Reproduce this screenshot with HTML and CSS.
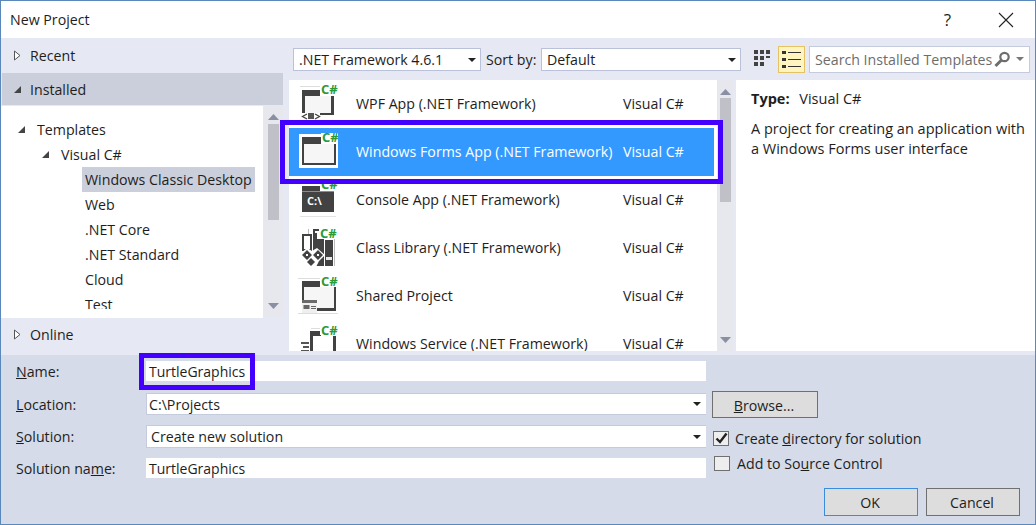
FILE: index.html
```html
<!DOCTYPE html>
<html lang="en">
<head>
    <meta charset="UTF-8">
    <title>New Project</title>
    <link rel="stylesheet" href="styles.css">
</head>
<body>
<div class="dialog">

    <div class="titlebar">
        <span class="title">New Project</span>
        <span class="help">?</span>
        <svg class="close" width="16" height="16" viewBox="0 0 16 16"><path d="M1 1L15 15M15 1L1 15" stroke="#222" stroke-width="1.1" fill="none"/></svg>
    </div>

    <div class="main">
        <div class="sidebar">
            <div class="section section-recent">
                <svg class="arrow" width="8" height="11" viewBox="0 0 8 11"><path d="M1 1L6.500 5.500L1 10Z" fill="#fff" stroke="#555"/></svg>
                <span>Recent</span>
            </div>
            <div class="section section-installed">
                <svg class="arrow" width="9" height="9" viewBox="0 0 9 9"><path d="M8 1V8H1Z" fill="#444"/></svg>
                <span>Installed</span>
            </div>
            <div class="tree-wrap">
                <div class="tree">
                    <div class="tree-row level-0">
                        <svg class="tree-arrow" width="9" height="9" viewBox="0 0 9 9"><path d="M8 1V8H1Z" fill="#444"/></svg>
                        Templates
                    </div>
                    <div class="tree-row level-1">
                        <svg class="tree-arrow" width="9" height="9" viewBox="0 0 9 9"><path d="M8 1V8H1Z" fill="#444"/></svg>
                        Visual C#
                    </div>
                    <div class="tree-row level-2 selected">Windows Classic Desktop</div>
                    <div class="tree-row level-2">Web</div>
                    <div class="tree-row level-2">.NET Core</div>
                    <div class="tree-row level-2">.NET Standard</div>
                    <div class="tree-row level-2">Cloud</div>
                    <div class="tree-row level-2">Test</div>
                </div>
                <div class="scrollbar scrollbar-tree">
                    <svg width="11" height="6" viewBox="0 0 11 6"><path d="M0 6L5.500 0L11 6Z" fill="#8a8fa3"/></svg>
                    <div class="thumb thumb-tree"></div>
                    <svg class="scroll-down" width="11" height="6" viewBox="0 0 11 6"><path d="M0 0L5.500 6L11 0Z" fill="#8a8fa3"/></svg>
                </div>
            </div>
            <div class="section section-online">
                <svg class="arrow" width="8" height="11" viewBox="0 0 8 11"><path d="M1 1L6.500 5.500L1 10Z" fill="#fff" stroke="#555"/></svg>
                <span>Online</span>
            </div>
        </div>

        <div class="content">
            <div class="toolbar">
                <div class="dropdown dropdown-framework"><span>.NET Framework 4.6.1</span><i class="caret"></i></div>
                <span class="sort-label">Sort by:</span>
                <div class="dropdown dropdown-sort"><span>Default</span><i class="caret"></i></div>
                <svg class="view-small" width="20" height="20" viewBox="0 0 20 20" fill="#424242">
                    <path d="M1 1h4v4H1zM7 1h4v4H7zM13 1h4v4h-4zM1 7h4v4H1zM7 7h4v4H7zM13 7h4v2h-4zM1 13h4v4H1zM7 13h4v4H7z"/>
                </svg>
                <div class="view-list">
                    <svg width="19" height="17" viewBox="0 0 19 17" fill="#333">
                        <path d="M0 0h4v3H0zM6 1h13v1H6zM0 7h4v3H0zM6 8h13v1H6zM0 14h4v3H0zM6 15h13v1H6z"/>
                    </svg>
                </div>
                <div class="search">
                    <span class="search-text">Search Installed Templates</span>
                    <svg class="search-icon" width="17" height="17" viewBox="0 0 17 17"><circle cx="10.500" cy="6" r="4.200" fill="none" stroke="#6d6d6d" stroke-width="2.200"/><path d="M7.500 9L1.500 15" stroke="#6d6d6d" stroke-width="3"/></svg>
                    <i class="caret caret-search"></i>
                </div>
            </div>

            <div class="panes">
                <div class="list-wrap">
                    <div class="list">
                        <div class="list-row">
                            <svg class="tpl-icon" width="40" height="48" viewBox="0 0 40 48">
                                <path d="M2 6H26V7H2Z" fill="#ddd"/>
                                <path d="M7 16H33V33H7Z" fill="#f6f6f6"/>
                                <path d="M4 10H36V35H22V33H33V16H7V33H4Z" fill="#424242"/>
                                <path d="M22 4H40V16H22Z" fill="#fff"/>
                                <text class="cs" x="23" y="14">C#</text>
                                <path d="M9 34L4.500 36.500L9 39M17 34L21.500 36.500L17 39" fill="none" stroke="#424242" stroke-width="1.300"/>
                                <path d="M10 33H16V39H10Z" fill="#555"/>
                            </svg>
                            <span class="tpl-name">WPF App (.NET Framework)</span>
                            <span class="tpl-lang">Visual C#</span>
                        </div>
                        <div class="list-row active">
                            <svg class="tpl-icon" width="40" height="48" viewBox="0 0 40 48">
                                <path d="M1 6H41V40H1Z" fill="#fff"/>
                                <path d="M4 9H38V37H4Z" fill="#424242"/>
                                <path d="M6 16H36V35H6Z" fill="#f6f6f6"/>
                                <path d="M23 5H41V16H23Z" fill="#fff"/>
                                <text class="cs" x="24" y="14">C#</text>
                            </svg>
                            <span class="tpl-name">Windows Forms App (.NET Framework)</span>
                            <span class="tpl-lang">Visual C#</span>
                        </div>
                        <div class="list-row">
                            <svg class="tpl-icon" width="40" height="48" viewBox="0 0 40 48">
                                <path d="M4 10H36V36H4Z" fill="#424242"/>
                                <path d="M4 15H36V16H4Z" fill="#8c8c8c"/>
                                <path d="M22 3H40V15H22Z" fill="#fff"/>
                                <text class="cs" x="23" y="13">C#</text>
                                <text class="console" x="9" y="29">C:\</text>
                                <path d="M2 40H38V41H2Z" fill="#e4e4e4"/>
                            </svg>
                            <span class="tpl-name">Console App (.NET Framework)</span>
                            <span class="tpl-lang">Visual C#</span>
                        </div>
                        <div class="list-row">
                            <svg class="tpl-icon" width="40" height="48" viewBox="0 0 40 48">
                                <path d="M10 5H11V10H10Z" fill="#bbb"/>
                                <path d="M4 10H14V27H4ZM6 12V25H12V12Z" fill="#424242" fill-rule="evenodd"/>
                                <path d="M15 5H26V42H15Z" fill="#424242"/>
                                <path d="M27 16H35V42H27Z" fill="#424242"/>
                                <path d="M28 33H34V36H28Z" fill="#e8e8e8"/>
                                <path d="M36 13H37V42H36Z" fill="#bbb"/>
                                <path d="M21 4H40V15H21Z" fill="#fff"/>
                                <path d="M17 7H21V15H19V9H17Z" fill="#fff"/>
                                <text class="cs" x="22" y="14">C#</text>
                                <path d="M2 30L9 24L14 27L19 24L27 31L21 37L18 43H8L5 36Z" fill="#fff"/>
                                <path d="M9 26L14 31L9 36L4 31ZM20 26L25 31L20 36L15 31ZM13 34L17 38L13 42L9 38Z" fill="#424242"/>
                                <path d="M8 30H10V32H8ZM19 30H21V32H19Z" fill="#fff"/>
                            </svg>
                            <span class="tpl-name">Class Library (.NET Framework)</span>
                            <span class="tpl-lang">Visual C#</span>
                        </div>
                        <div class="list-row">
                            <svg class="tpl-icon" width="40" height="48" viewBox="0 0 40 48">
                                <path d="M0 6H24V7H0ZM0 41H40V42H0Z" fill="#ddd"/>
                                <path d="M4 9H38V39H4Z" fill="#f6f6f6"/>
                                <path d="M4 9H23V15H6V28H4ZM36 15H38V39H19V36H36Z" fill="#424242"/>
                                <path d="M22 4H40V15H22Z" fill="#fff"/>
                                <text class="cs" x="23" y="14">C#</text>
                                <path d="M4 28H19V41H4Z" fill="#efefef"/>
                                <path d="M4 28H19V31H4Z" fill="#6a6a6a"/>
                                <path d="M5.500 33H11.500V37H5.500ZM13 34H18V35H13ZM13 36H18V37H13Z" fill="#666"/>
                            </svg>
                            <span class="tpl-name">Shared Project</span>
                            <span class="tpl-lang">Visual C#</span>
                        </div>
                        <div class="list-row">
                            <svg class="tpl-icon" width="40" height="48" viewBox="0 0 40 48">
                                <path d="M13 8H25V9H13Z" fill="#ddd"/>
                                <path d="M15 16H36V48H15Z" fill="#fff"/>
                                <path d="M12 11H23V16H15V48H12ZM35 16H38V48H35Z" fill="#424242"/>
                                <path d="M22 3H40V15H22Z" fill="#fff"/>
                                <text class="cs" x="23" y="15">C#</text>
                                <path d="M3 22H11V24H3ZM5 26H11V28H5ZM3 30H11V32H3Z" fill="#555"/>
                            </svg>
                            <span class="tpl-name">Windows Service (.NET Framework)</span>
                            <span class="tpl-lang">Visual C#</span>
                        </div>
                    </div>
                    <div class="scrollbar scrollbar-list">
                        <svg width="11" height="6" viewBox="0 0 11 6"><path d="M0 6L5.500 0L11 6Z" fill="#8a8fa3"/></svg>
                        <div class="thumb thumb-list"></div>
                        <svg class="scroll-down" width="11" height="6" viewBox="0 0 11 6"><path d="M0 0L5.500 6L11 0Z" fill="#8a8fa3"/></svg>
                    </div>
                </div>

                <div class="details">
                    <p class="details-type"><strong>Type:</strong> <span>Visual C#</span></p>
                    <p class="details-desc">A project for creating an application with<br>a Windows Forms user interface</p>
                </div>
            </div>
        </div>
    </div>

    <div class="form">
        <div class="form-grid">
            <label class="form-label"><u>N</u>ame:</label>
            <div class="field field-name">TurtleGraphics</div>
            <div></div>

            <label class="form-label form-label-mid"><u>L</u>ocation:</label>
            <div class="field field-combo field-location"><span>C:\Projects</span><i class="caret"></i></div>
            <button class="btn btn-browse"><span><u>B</u>rowse...</span></button>

            <label class="form-label form-label-mid"><u>S</u>olution:</label>
            <div class="field field-combo field-solution"><span>Create new solution</span><i class="caret"></i></div>
            <div class="check check-directory">
                <span class="checkbox"><svg width="13" height="12" viewBox="0 0 13 12"><path d="M1.500 6.500L5 10L11.500 1.500" fill="none" stroke="#222" stroke-width="2.400"/></svg></span>
                <span>Create <u>d</u>irectory for solution</span>
            </div>

            <label class="form-label">Solution na<u>m</u>e:</label>
            <div class="field field-name">TurtleGraphics</div>
            <div class="check check-source">
                <span class="checkbox"></span>
                <span>Add to So<u>u</u>rce Control</span>
            </div>
        </div>
        <div class="form-buttons">
            <button class="btn btn-action btn-default">OK</button>
            <button class="btn btn-action">Cancel</button>
        </div>
    </div>

    <div class="callout callout-template"></div>
    <div class="callout callout-name"></div>
</div>
</body>
</html>
```

FILE: styles.css
```css
* {
    box-sizing: border-box;
}

html, body {
    margin: 0;
    padding: 0;
}

body {
    width: 1036px;
    height: 525px;
    overflow: hidden;
    font-family: "Open Sans", "Noto Sans", sans-serif;
    font-size: 14.2px;
    color: #1e1e1e;
    background: #fff;
}

.dialog {
    position: relative;
    display: flex;
    flex-direction: column;
    width: 1036px;
    height: 525px;
    border: 1px solid #5b88bb;
    background: #fff;
}

.titlebar {
    display: flex;
    align-items: center;
    height: 37px;
    padding-left: 9px;
}

.title {
    flex: 1;
}

.help {
    margin-right: 47px;
    font-size: 17px;
}

.close {
    margin-right: 21px;
}

.main {
    display: flex;
    height: 317px;
    background: #e6e9f4;
}

/* left side */
.sidebar {
    display: flex;
    flex-direction: column;
    width: 282px;
}

.section {
    display: flex;
    align-items: center;
    padding-left: 12px;
}

.section .arrow {
    width: 9px;
    margin-right: 8px;
}

.section-recent {
    height: 35px;
}

.section-installed {
    height: 32px;
    margin-left: 1px;
    padding-left: 11px;
    padding-top: 2px;
    background: #cbcedb;
}

.section-online {
    height: 38px;
    padding-bottom: 4px;
}

.tree-wrap {
    display: flex;
    height: 212px;
    margin-top: 1px;
}

.tree {
    flex: 1;
    height: 203px;
    padding-top: 11px;
    overflow: hidden;
    background: #fff;
    box-shadow: 0 9px 0 #fff;
}

.tree-row {
    display: flex;
    align-items: center;
    height: 25px;
    white-space: nowrap;
}

.tree-arrow {
    margin-right: 11px;
}

.level-0 {
    padding-left: 16px;
}

.level-1 {
    padding-left: 40px;
}

.level-2 {
    margin-left: 81px;
    margin-right: 8px;
    padding-left: 3px;
}

.selected {
    background: #cbcedb;
}

.scrollbar {
    display: flex;
    flex-direction: column;
    align-items: center;
    background: #e7e7ee;
}

.scrollbar-tree {
    width: 20px;
    padding-top: 8px;
}

.scrollbar-list {
    width: 16px;
    padding-top: 9px;
}

.thumb {
    width: 11px;
    background: #c0c0c8;
}

.thumb-tree {
    height: 96px;
    margin-top: 4px;
}

.thumb-list {
    height: 104px;
    margin-top: 3px;
}

.scroll-down {
    margin-top: auto;
    margin-bottom: 8px;
}

/* templates */
.content {
    display: flex;
    flex: 1;
    flex-direction: column;
    min-width: 0;
}

.toolbar {
    display: flex;
    align-items: center;
    height: 42px;
    padding-left: 10px;
}

.dropdown {
    display: flex;
    align-items: center;
    justify-content: space-between;
    height: 23px;
    padding: 1px 4px 0 5px;
    border: 1px solid #b9c2d9;
    background: #fff;
}

.dropdown-framework {
    width: 188px;
}

.sort-label {
    width: 60px;
    padding-left: 5px;
}

.dropdown-sort {
    width: 200px;
}

.caret {
    width: 0;
    height: 0;
    border-top: 4px solid #222;
    border-left: 4px solid transparent;
    border-right: 4px solid transparent;
}

.view-small {
    margin-left: 12px;
}

.view-list {
    display: flex;
    align-items: center;
    justify-content: center;
    width: 27px;
    height: 27px;
    margin-left: 5px;
    border: 1px solid #e5c365;
    background: #fdf4bf;
}

.search {
    display: flex;
    align-items: center;
    width: 221px;
    height: 27px;
    margin-left: 4px;
    padding-left: 5px;
    border: 1px solid #c3cbdd;
    background: #fff;
}

.search-text {
    color: #6d6d6d;
    white-space: nowrap;
}

.search-icon {
    flex: none;
    margin-left: 2px;
}

.caret-search {
    flex: none;
    margin-left: 5px;
    border-top-color: #777;
}

.panes {
    display: flex;
    flex: 1;
    min-height: 0;
    padding-left: 6px;
}

.list-wrap {
    display: flex;
    width: 444px;
    height: 271px;
    background: #fff;
}

.list {
    flex: 1;
    overflow: hidden;
    background: #fff;
}

.list-row {
    display: flex;
    align-items: center;
    height: 48px;
    padding-left: 9px;
    white-space: nowrap;
}

.tpl-icon {
    flex: none;
}

.tpl-name {
    width: 267px;
    margin-left: 18px;
    margin-bottom: 2px;
}

.tpl-lang {
    margin-bottom: 2px;
}

.list-row.active {
    background: #3399ff;
    color: #fff;
    margin-right: 3px;
}

.cs {
    font-size: 13px;
    font-weight: 700;
    fill: #2b9a36;
}

.console {
    font-family: "Open Sans", sans-serif;
    font-size: 11px;
    font-weight: 700;
    fill: #fff;
}

.details {
    flex: 1;
    height: 271px;
    margin-left: 3px;
    padding: 9px 0 0 15px;
    background: #fff;
    font-size: 14.500px;
    white-space: nowrap;
}

.details p {
    margin: 0;
}

.details-type {
    margin-bottom: 11px !important;
}

.details-type span {
    margin-left: 6px;
}

.details-desc {
    line-height: 20px;
}

/* bottom form */
.form {
    flex: 1;
    padding: 6px 15px 0;
    background: #d6dbe9;
}

.form-grid {
    display: grid;
    grid-template-columns: 130px 560px 1fr;
    grid-template-rows: 32px 32px 33px 30px;
}

.form-label {
    height: 20px;
    padding-top: 1px;
    line-height: 20px;
}

.form-label-mid {
    height: 22px;
    line-height: 22px;
}

.field {
    display: flex;
    align-items: center;
    height: 20px;
    padding-left: 3px;
    background: #fff;
}

.field-name {
    font-size: 14px;
}

.field-combo {
    justify-content: space-between;
    padding-right: 5px;
    border: 1px solid #c3cbdd;
    border-right: none;
}

.field-location {
    height: 22px;
    padding-left: 2px;
}

.field-solution {
    height: 23px;
    padding-left: 4px;
}

.btn {
    padding: 1px 2px 0 0;
    border: 1px solid #707070;
    background: #dddddd;
    font-family: inherit;
    font-size: 14.200px;
    color: #1e1e1e;
}

.btn-browse {
    width: 106px;
    height: 27px;
    margin: -2px 0 0 6px;
}

.check {
    display: flex;
    align-items: center;
    gap: 6px;
    height: 20px;
    margin-left: 7px;
}

.check-directory {
    margin-top: 3px;
}

.check-source {
    margin: -5px 0 0 8px;
    gap: 7px;
}

.checkbox {
    display: flex;
    align-items: center;
    justify-content: center;
    flex: none;
    width: 16px;
    height: 15px;
    border: 1px solid #707070;
    background: #eeeeee;
}

.form-buttons {
    display: flex;
    justify-content: flex-end;
    gap: 8px;
}

.btn-action {
    width: 94px;
    height: 28px;
}

.btn-default {
    border-color: #3a8cdc;
}

/* purple annotation boxes drawn on top of the dialog */
.callout {
    position: absolute;
    border: 5px solid #4400ff;
}

.callout-template {
    left: 279px;
    top: 119px;
    width: 443px;
    height: 64px;
}

.callout-name {
    left: 138px;
    top: 352px;
    width: 116px;
    height: 37px;
}
```
